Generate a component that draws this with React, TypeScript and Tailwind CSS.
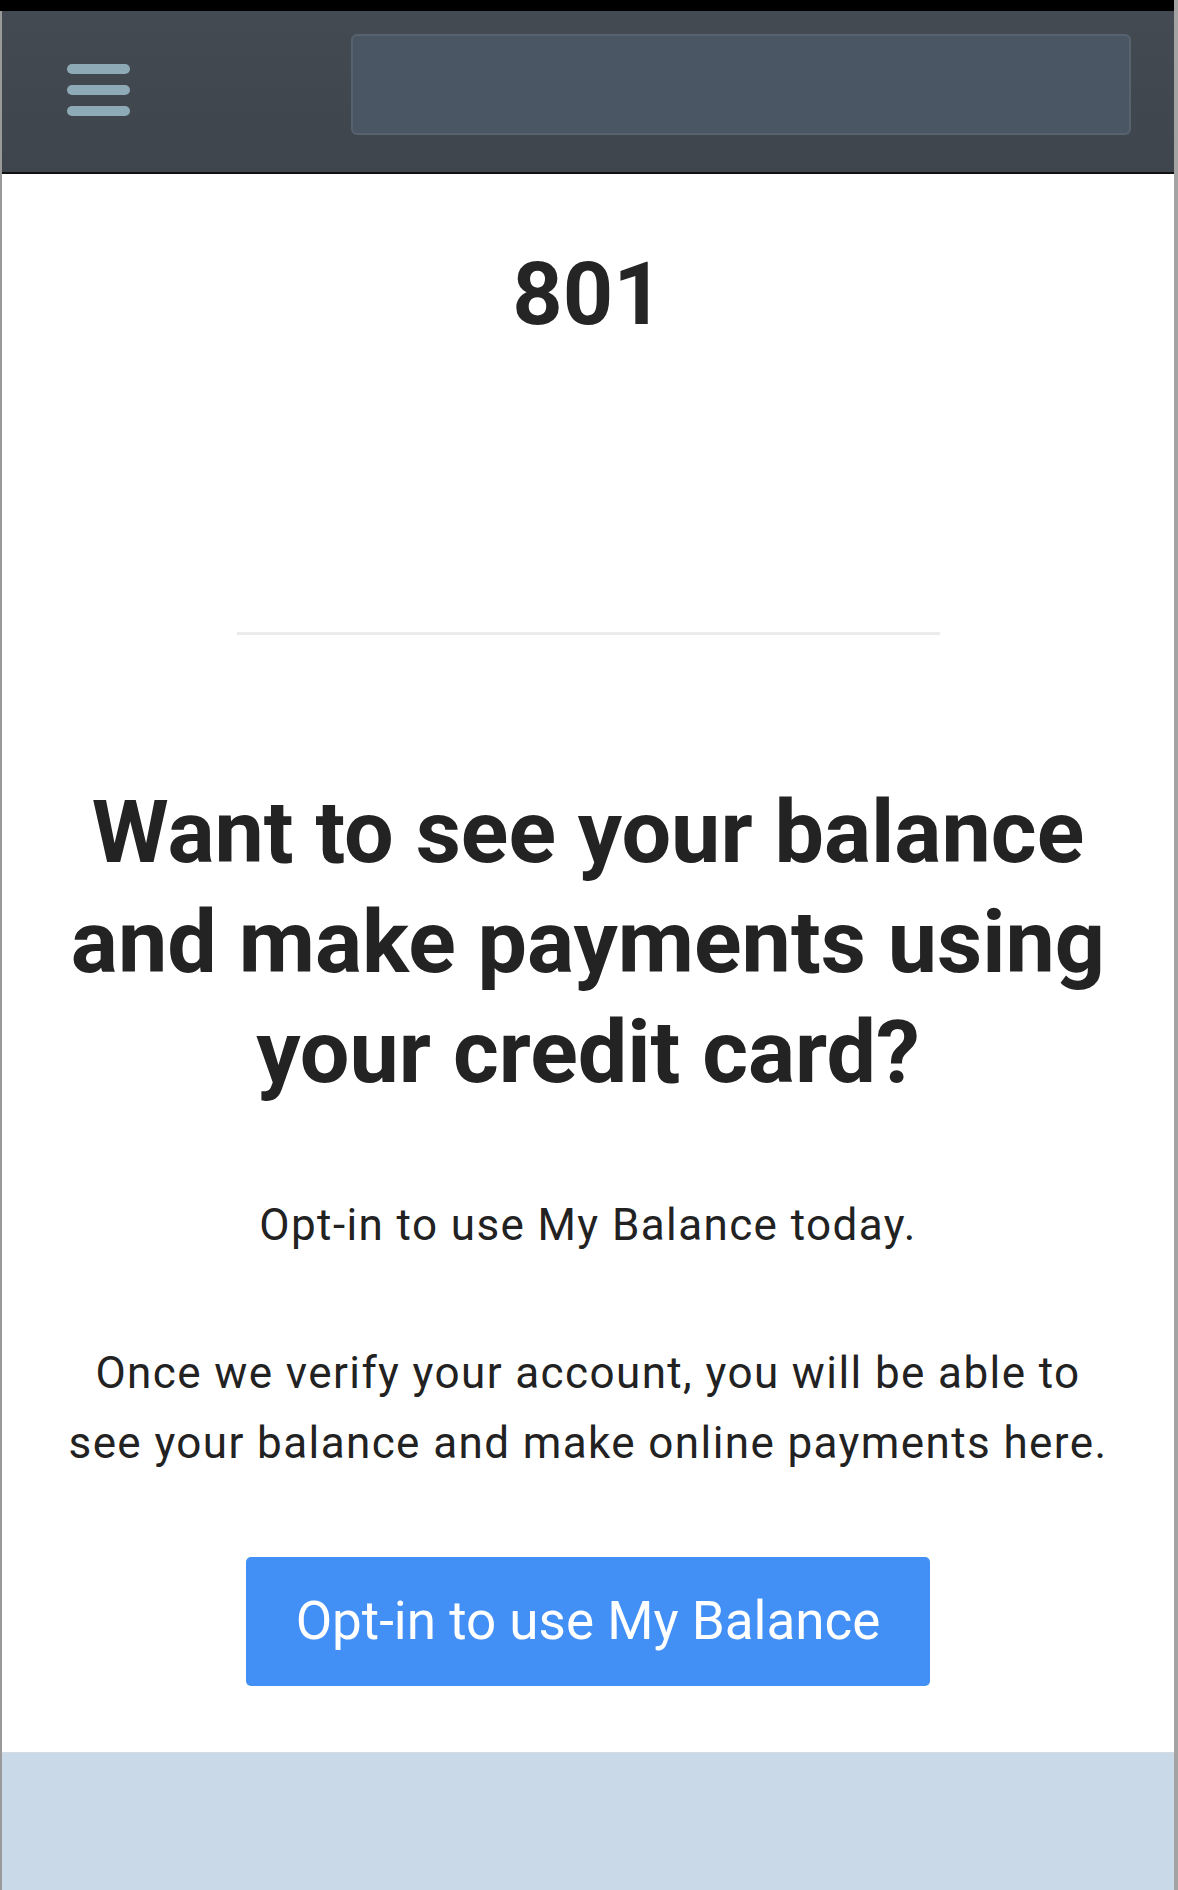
import React from "react";

export default function App() {
  return (
    <div className="min-h-[1890px] bg-[#a3a3a3] pr-[4px] font-['Roboto','Liberation_Sans',sans-serif]">
      <div className="h-[11px] bg-black" />
      <div className="border-l-2 border-[#9a9a9a] bg-white">
        <header className="flex h-[163px] items-start border-b-2 border-[#111] bg-gradient-to-b from-[#444a51] to-[#3f454c] pl-[65px] pr-[43px]">
          <div className="mt-[53px] flex w-[63px] flex-col gap-[11px]">
            <div className="h-[10px] rounded-full bg-[#8eaab6]" />
            <div className="h-[10px] rounded-full bg-[#8eaab6]" />
            <div className="h-[10px] rounded-full bg-[#8eaab6]" />
          </div>
          <div className="ml-auto mt-[23px] h-[101px] w-[780px] rounded-md border-2 border-[#56636f] bg-[#4a5663]" />
        </header>

        <main className="flex flex-col items-center pt-[76px] text-[#252525]">
          <div className="text-[88px] font-bold leading-[88px]">801</div>
          <div className="mt-[294px] h-[3px] w-[703px] bg-[#ebebeb]" />
          <h1 className="mt-[142px] w-[1050px] text-center text-[88px] font-bold leading-[110px] text-[#232323]">
            Want to see your balance and make payments using your credit card?
          </h1>
          <p className="mt-[83px] w-[1050px] text-center text-[44px] leading-[70px] tracking-[1.4px] text-[#222]">
            Opt-in to use My Balance today.
          </p>
          <p className="mt-[78px] w-[1050px] text-center text-[44px] leading-[70px] tracking-[1.4px] text-[#222]">
            Once we verify your account, you will be able to see your balance and make online payments here.
          </p>
          <button className="mt-[79px] h-[129px] w-[684px] rounded-[5px] bg-[#4290f5] text-[53px] text-white">
            Opt-in to use My Balance
          </button>
          <div className="h-[66px]" />
        </main>

        <footer className="h-[140px] border-t border-[#d4dde6] bg-[#c9d9e8]" />
      </div>
    </div>
  );
}
